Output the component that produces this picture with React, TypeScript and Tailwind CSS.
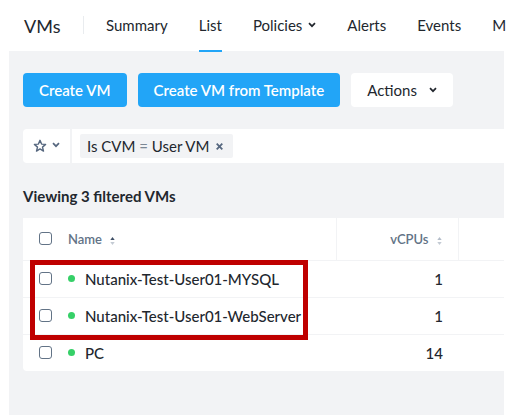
import React from "react";

type VM = { name: string; vcpus: number };

const vms: VM[] = [
  { name: "Nutanix-Test-User01-MYSQL", vcpus: 1 },
  { name: "Nutanix-Test-User01-WebServer", vcpus: 1 },
  { name: "PC", vcpus: 14 },
];

function Chevron() {
  return (
    <svg width="8" height="6" viewBox="0 0 8 6" fill="none" stroke="currentColor" strokeWidth="1.7" aria-hidden="true">
      <path d="M1 1.2 4 4.2 7 1.2" />
    </svg>
  );
}

function SortIcon({ active = false }: { active?: boolean }) {
  return (
    <svg className="mt-1" width="5" height="8" viewBox="0 0 5 8" aria-hidden="true">
      <path d="M2.5 0 4.7 3H.3Z" fill={active ? "#3f4f66" : "#b4bdc9"} />
      <path d="M2.5 8 4.7 5H.3Z" fill="#c3cad3" />
    </svg>
  );
}

function Checkbox({ label }: { label: string }) {
  return (
    <input
      type="checkbox"
      aria-label={label}
      className="block size-[13px] appearance-none rounded-[3px] border border-[#627386] bg-white checked:bg-[#22a5f7]"
    />
  );
}

const tab = "flex h-[52px] items-center gap-[6px] border-b-2 border-transparent whitespace-nowrap";

export default function App() {
  return (
    <div className="min-h-screen overflow-hidden bg-white px-2 font-['Lato','Liberation_Sans',sans-serif] text-[15px] leading-5 font-normal text-[#22272e]">
      <div className="ml-px flex min-h-screen flex-col">
        <header className="flex h-[51px] pl-[15px]">
          <h1 className="flex h-[51px] w-[59px] shrink-0 items-center text-lg font-normal">VMs</h1>
          <div className="mt-4 h-[18px] w-px shrink-0 bg-[#e9ecef]" />
          <nav className="ml-[22px] flex min-w-0 flex-1 gap-[31px]">
            <a href="#summary" className={tab}>Summary</a>
            <a href="#list" aria-current="page" className="relative z-10 flex h-[52px] items-center border-b-2 border-[#22a5f7]">List</a>
            <button className={tab}>
              Policies
              <Chevron />
            </button>
            <a href="#alerts" className={tab}>Alerts</a>
            <a href="#events" className={tab}>Events</a>
            <a href="#more" className={tab}>M</a>
          </nav>
        </header>

        <main className="flex-1 bg-[#f2f3f5] pt-[22px] pb-8 pl-[14px]">
          <div className="flex gap-[11px]">
            <button className="h-[34px] rounded-sm bg-[#22a5f7] px-4 font-semibold whitespace-nowrap text-white">Create VM</button>
            <button className="h-[34px] rounded-sm bg-[#22a5f7] px-4 font-semibold whitespace-nowrap text-white">Create VM from Template</button>
            <button className="flex h-[34px] items-center gap-3 rounded-sm bg-white px-4">
              Actions
              <Chevron />
            </button>
          </div>

          <div className="mt-[22px] flex h-[34px] items-center rounded-l-sm bg-white">
            <button aria-label="Saved filters" className="flex h-full w-[49px] items-center gap-[5px] border-r-2 border-[#f2f3f5] pl-[10px] text-[#56677f]">
              <svg width="14" height="14" viewBox="0 0 14 14" fill="none" stroke="currentColor" strokeWidth="1.4" strokeLinejoin="round" aria-hidden="true">
                <path d="M7 1.3 8.6 5.1 12.6 5.4 9.5 8.1 10.5 12.1 7 9.9 3.500 12.100 4.500 8.100 1.400 5.400 5.400 5.100Z" />
              </svg>
              <span className="pb-[3px]"><Chevron /></span>
            </button>
            <div className="ml-2 flex h-6 items-center gap-1 rounded-xs bg-[#f2f3f5] px-[7px] whitespace-nowrap">
              <span>Is CVM <span className="text-[#7b8794]">=</span> User VM</span>
              <button aria-label="Remove filter" className="px-[3px] text-[#56677f]">
                <svg width="7" height="7" viewBox="0 0 7 7" stroke="currentColor" strokeWidth="1.8" aria-hidden="true">
                  <path d="m.7.7 5.6 5.6M6.3.7.7 6.3" />
                </svg>
              </button>
            </div>
          </div>

          <h2 className="mt-[23px] font-bold">Viewing 3 filtered VMs</h2>

          <div className="relative mt-[12px]">
            <table className="w-full table-fixed border-collapse overflow-hidden rounded-bl-sm bg-white">
              <colgroup>
                <col className="w-[45px]" />
                <col />
                <col className="w-[122px]" />
                <col className="w-[46px]" />
              </colgroup>
              <thead>
                <tr className="h-[42px] border-b border-[#f2f3f5] text-[13px] text-[#627386]">
                  <th className="pl-4"><Checkbox label="Select all VMs" /></th>
                  <th className="border-r border-[#f2f3f5] text-left">
                    <button className="flex items-center gap-2 font-semibold">Name <SortIcon active /></button>
                  </th>
                  <th className="border-r border-[#f2f3f5] pr-4">
                    <button className="ml-auto flex items-center gap-2 font-semibold">vCPUs <SortIcon /></button>
                  </th>
                  <th />
                </tr>
              </thead>
              <tbody className="font-medium">
                {vms.map((vm) => (
                  <tr key={vm.name} className="h-[37px] border-b border-[#f2f3f5] last:border-b-0">
                    <td className="pl-4"><Checkbox label={`Select ${vm.name}`} /></td>
                    <td>
                      <span className="flex items-center gap-[10px] whitespace-nowrap">
                        <span className="size-[7px] rounded-full bg-[#36d068]" />
                        {vm.name}
                      </span>
                    </td>
                    <td className="pr-[15px] text-right">{vm.vcpus}</td>
                    <td />
                  </tr>
                ))}
              </tbody>
            </table>
            <div className="pointer-events-none absolute top-[42px] left-[7px] h-20 w-[278px] border-5 border-[#bf0000]" />
          </div>
        </main>
      </div>
    </div>
  );
}
